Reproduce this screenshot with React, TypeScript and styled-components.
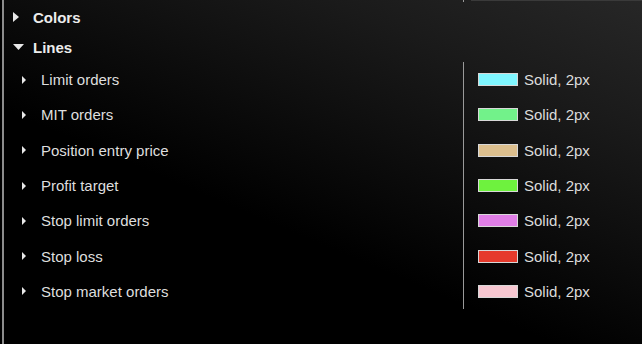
import React from 'react';
import styled, { createGlobalStyle } from 'styled-components';

const GlobalStyle = createGlobalStyle`
  html, body {
    margin: 0;
    padding: 0;
    background: #000;
  }
  #root {
    width: 642px;
    height: 344px;
    overflow: hidden;
  }
`;

const Panel = styled.div`
  box-sizing: border-box;
  width: 642px;
  height: 344px;
  margin-left: 2px;
  border-left: 2px solid #8c8c8c;
  background: linear-gradient(203deg, #272727 0%, #1a1a1a 22%, #0b0b0b 45%, #000 62%);
  font-family: 'Liberation Sans', Arial, sans-serif;
  color: #e2e2e2;
  display: flex;
  flex-direction: column;
`;

const TopStrip = styled.div`
  height: 2px;
  display: grid;
  grid-template-columns: 459px 1fr;
`;

const TopCell = styled.div`
  border-left: 1px solid #9a9a9a;
  padding-left: 7px;
  div {
    height: 1px;
    background: #3a3a3a;
  }
`;

const GroupRow = styled.div`
  height: 30px;
  display: flex;
  align-items: center;
  padding-left: 9px;
  font-size: 15px;
  font-weight: bold;
  color: #ececec;
`;

const Arrow = styled.span<{ $small?: boolean }>`
  display: inline-block;
  width: ${p => (p.$small ? 19 : 20)}px;
  flex: none;
  svg {
    display: block;
  }
`;

const ChildRow = styled.div`
  height: 35.3px;
  display: grid;
  grid-template-columns: 459px 1fr;
  align-items: stretch;
`;

const NameCell = styled.div`
  display: flex;
  align-items: center;
  padding-left: 18px;
  font-size: 15px;
  color: #dedede;
`;

const ValueCell = styled.div`
  border-left: 1px solid #9a9a9a;
  display: flex;
  align-items: center;
  padding-left: 14px;
  gap: 6px;
  font-size: 15px;
  color: #dcdcdc;
`;

const Swatch = styled.span<{ $color: string }>`
  box-sizing: border-box;
  width: 40px;
  height: 13px;
  background: ${p => p.$color};
  border: 1px solid #d8d8d8;
`;

const RightTri = ({ w, h }: { w: number; h: number }) => (
  <svg width={w} height={h} viewBox={`0 0 ${w} ${h}`}>
    <polygon points={`0,0 ${w},${h / 2} 0,${h}`} fill="#e8e8e8" />
  </svg>
);

const DownTri = () => (
  <svg width={11} height={6} viewBox="0 0 11 6">
    <polygon points="0,0 11,0 5.5,6" fill="#e8e8e8" />
  </svg>
);

const lines = [
  { name: 'Limit orders', color: '#7ff6ff' },
  { name: 'MIT orders', color: '#72f28a' },
  { name: 'Position entry price', color: '#dcbf8e' },
  { name: 'Profit target', color: '#6ef23e' },
  { name: 'Stop limit orders', color: '#e07ee6' },
  { name: 'Stop loss', color: '#e63a2c' },
  { name: 'Stop market orders', color: '#f7c7d1' },
];

export default function App() {
  return (
    <>
      <GlobalStyle />
      <Panel>
        <TopStrip>
          <span />
          <TopCell>
            <div />
          </TopCell>
        </TopStrip>
        <GroupRow>
          <Arrow>
            <RightTri w={6} h={10} />
          </Arrow>
          Colors
        </GroupRow>
        <GroupRow>
          <Arrow>
            <DownTri />
          </Arrow>
          Lines
        </GroupRow>
        {lines.map(l => (
          <ChildRow key={l.name}>
            <NameCell>
              <Arrow $small>
                <RightTri w={4} h={8} />
              </Arrow>
              {l.name}
            </NameCell>
            <ValueCell>
              <Swatch $color={l.color} />
              Solid, 2px
            </ValueCell>
          </ChildRow>
        ))}
      </Panel>
    </>
  );
}
